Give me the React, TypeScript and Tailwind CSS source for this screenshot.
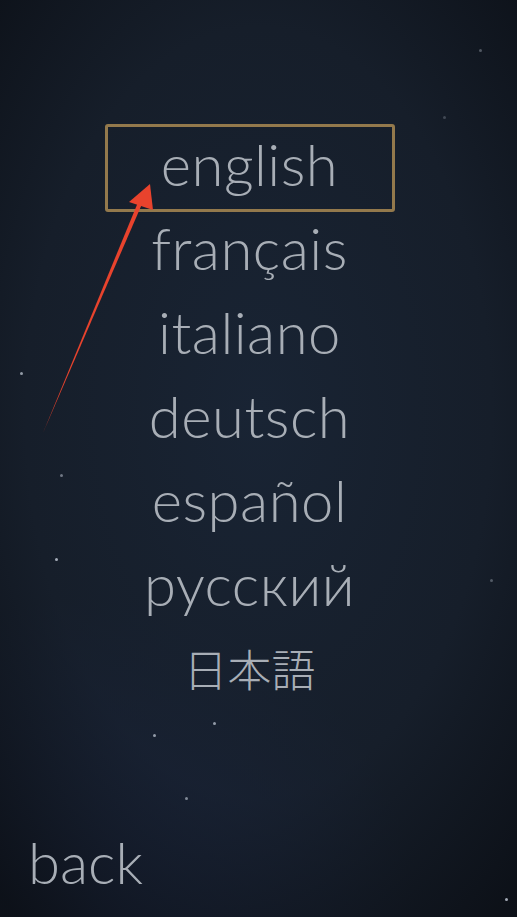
import React from "react";

const languages = [
  { label: "english", selected: true },
  { label: "français" },
  { label: "italiano" },
  { label: "deutsch" },
  { label: "español" },
  { label: "русский" },
];

// tiny specks scattered over the night sky
const stars: [number, number, number][] = [
  [480, 50, 0.35],
  [444, 117, 0.25],
  [21, 373, 0.7],
  [61, 475, 0.5],
  [56, 559, 0.8],
  [491, 580, 0.35],
  [214, 723, 0.7],
  [154, 735, 0.7],
  [186, 798, 0.6],
  [506, 899, 0.8],
];

function Pointer() {
  return (
    <svg className="pointer-events-none absolute inset-0" width="517" height="917" aria-hidden>
      <polygon points="43,433 145,197 141,195" fill="#e8432d" />
      <polygon points="150,184 129,202 153,210" fill="#e8432d" />
    </svg>
  );
}

export default function App() {
  return (
    <div className="relative h-[917px] w-[517px] overflow-hidden bg-[#161e2a] font-['Lato',_'Noto_Sans',_sans-serif] text-[#a8aeb6]">
      <div className="absolute inset-0 bg-[radial-gradient(ellipse_60%_35%_at_20%_100%,_#1e2b4d_0%,_rgba(30,43,77,0)_100%)]" />
      <div className="absolute inset-0 bg-[radial-gradient(ellipse_75%_70%_at_50%_45%,_rgba(25,36,52,1)_0%,_rgba(22,30,42,0.6)_60%,_rgba(12,16,23,0.95)_100%)]" />
      {stars.map(([x, y, o], i) => (
        <span
          key={i}
          className="absolute h-[3px] w-[3px] rounded-full bg-[#c8d0dc]"
          style={{ left: x - 1, top: y - 1, opacity: o }}
        />
      ))}

      <div className="relative flex h-full flex-col">
        <ul className="flex flex-col items-center pr-[18px] pt-[122px]">
          {languages.map((lang) =>
            lang.selected ? (
              <li
                key={lang.label}
                className="mb-[-6px] mt-[2px] flex h-[88px] w-[290px] items-center justify-center rounded-[3px] border-[3px] border-[#93794c] pb-[8px] text-[58px] font-light leading-none tracking-[0.5px]"
              >
                {lang.label}
              </li>
            ) : (
              <li
                key={lang.label}
                className="flex h-[84px] items-center justify-center text-[58px] font-light leading-none tracking-[0.5px]"
              >
                {lang.label}
              </li>
            ),
          )}
          <li className="flex h-[84px] items-center justify-center font-['Noto_Sans_CJK_JP',_sans-serif] text-[44px] font-light">
            日本語
          </li>
        </ul>

        <div className="mt-auto pb-[26px] pl-[28px] text-[58px] font-light leading-none">back</div>
      </div>

      <Pointer />
    </div>
  );
}
